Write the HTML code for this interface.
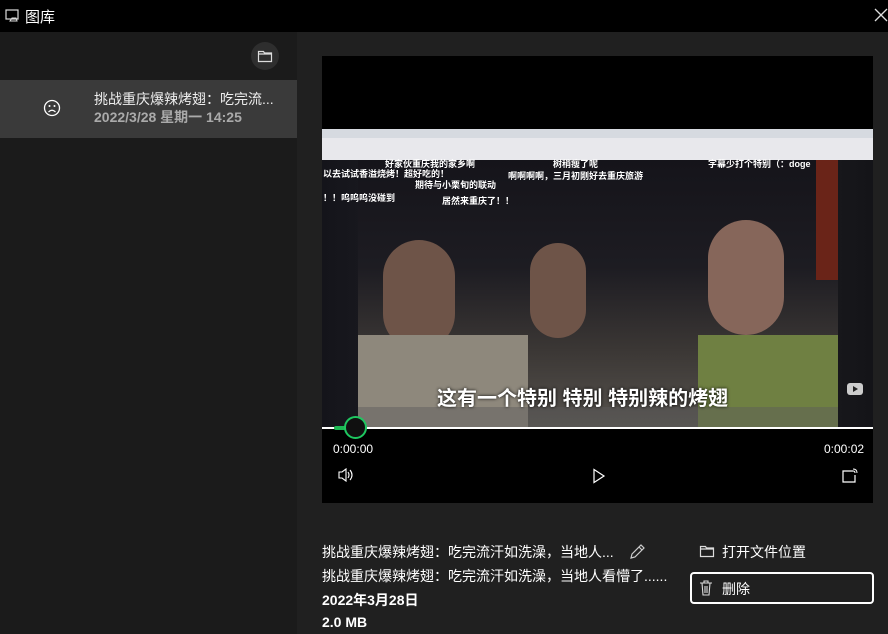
<!DOCTYPE html>
<html><head><meta charset="utf-8"><style>
*{margin:0;padding:0;box-sizing:border-box}
body{width:888px;height:634px;background:#202020;font-family:"Liberation Sans","Noto Sans CJK SC",sans-serif;color:#fff;position:relative;overflow:hidden}
.abs{position:absolute}
</style></head><body>
<div class="abs" style="left:0;top:0;width:888px;height:32px;background:#000"></div>
<svg class="abs" style="left:5px;top:9px" width="15" height="14" viewBox="0 0 15 14"><rect x="1" y="1" width="12" height="9" fill="none" stroke="#ddd" stroke-width="1.2"/><path d="M5 12 l2-3 h4 l1 3z" fill="none" stroke="#ddd"/></svg>
<div class="abs" style="left:25px;top:6px;font-size:15px;color:#fff">图库</div>
<svg class="abs" style="left:874px;top:8px" width="14" height="14"><path d="M1 1L13 13M13 1L1 13" stroke="#ddd" stroke-width="1.3"/></svg>
<div class="abs" style="left:0;top:32px;width:297px;height:602px;background:#1b1b1b"></div>
<div class="abs" style="left:251px;top:42px;width:28px;height:28px;border-radius:50%;background:#2e2e2e"></div>
<svg class="abs" style="left:257px;top:49px" width="16" height="14"><path d="M1.5 2.5h5l1 1.5h7v8.5h-13z M1.5 5h13" fill="none" stroke="#ddd" stroke-width="1.2"/></svg>
<div class="abs" style="left:0;top:80px;width:297px;height:58px;background:#3a3a3a"></div>
<svg class="abs" style="left:43px;top:99px" width="18" height="18"><circle cx="9" cy="9" r="7.5" fill="none" stroke="#fff" stroke-width="1.3"/><circle cx="6.5" cy="7" r="1" fill="#fff"/><circle cx="11.5" cy="7" r="1" fill="#fff"/><path d="M5.5 13q3.5-3.5 7 0" fill="none" stroke="#fff" stroke-width="1.2"/></svg>
<div class="abs" style="left:94px;top:89px;font-size:14px;color:#eee">挑战重庆爆辣烤翅：吃完流...</div>
<div class="abs" style="left:94px;top:107px;font-size:14px;color:#aaa;font-weight:bold">2022/3/28 星期一 14:25</div>

<div class="abs" style="left:322px;top:56px;width:551px;height:447px;background:#000"></div>
<div class="abs" style="left:322px;top:129px;width:551px;height:300px;background:linear-gradient(90deg,#14141a,#2a2a30 40%,#222226 70%,#141418)"></div>
<div class="abs" style="left:322px;top:129px;width:551px;height:31px;background:#e8e8ec"></div>
<div class="abs" style="left:322px;top:129px;width:551px;height:9px;background:#d6dae0"></div>
<div class="abs" style="left:358px;top:160px;width:480px;height:268px;background:linear-gradient(180deg,#15141a 0%,#1d1c22 40%,#3a3634 70%,#57534e 100%)"></div>
<div class="abs" style="left:383px;top:240px;width:72px;height:110px;border-radius:36px;background:#6e5448"></div>
<div class="abs" style="left:530px;top:243px;width:56px;height:95px;border-radius:28px;background:#6e5448"></div>
<div class="abs" style="left:708px;top:220px;width:76px;height:115px;border-radius:38px;background:#86665a"></div>
<div class="abs" style="left:698px;top:335px;width:140px;height:93px;background:#6f8042"></div>
<div class="abs" style="left:358px;top:335px;width:170px;height:93px;background:#8e887c"></div>
<div class="abs" style="left:816px;top:160px;width:22px;height:120px;background:#6a2418"></div>
<div class="abs" style="left:358px;top:407px;width:480px;height:20px;background:rgba(90,90,90,.45)"></div>
<div class="abs" style="left:323px;top:168px;font-size:9px;color:#fff;font-weight:bold;line-height:12px">以去试试香溢烧烤！超好吃的！<br><br>！！呜呜呜没碰到</div>
<div class="abs" style="left:385px;top:157px;font-size:9px;color:#fff;font-weight:bold">好家伙重庆我的家乡啊</div>
<div class="abs" style="left:415px;top:178px;font-size:9px;color:#fff;font-weight:bold">期待与小栗旬的联动</div>
<div class="abs" style="left:442px;top:194px;font-size:9px;color:#fff;font-weight:bold">居然来重庆了！！</div>
<div class="abs" style="left:508px;top:158px;font-size:9px;color:#fff;font-weight:bold;text-align:center;line-height:12px">树稍瘦了呢<br>啊啊啊啊，三月初刚好去重庆旅游</div>
<div class="abs" style="left:708px;top:157px;font-size:9px;color:#fff;font-weight:bold">字幕少打个特别（：doge</div>
<div class="abs" style="left:437px;top:382px;font-size:20px;color:#fff;font-weight:bold;text-shadow:0 0 3px #000">这有一个特别 特别 特别辣的烤翅</div>
<div class="abs" style="left:322px;top:427px;width:551px;height:2px;background:#fff"></div>
<div class="abs" style="left:334px;top:426px;width:12px;height:4px;background:#1db954;border-radius:2px"></div>
<div class="abs" style="left:344px;top:416px;width:23px;height:23px;border-radius:50%;background:#101010;border:2px solid #1ec760"></div>
<div class="abs" style="left:333px;top:442px;font-size:12px;color:#fff">0:00:00</div>
<div class="abs" style="left:824px;top:442px;font-size:12px;color:#fff">0:00:02</div>
<svg class="abs" style="left:337px;top:467px" width="18" height="16"><path d="M2 5h3l4-3v12l-4-3H2z M11 5q2 3 0 6 M13 3q4 5 0 10" fill="none" stroke="#fff" stroke-width="1.1"/></svg>
<svg class="abs" style="left:592px;top:468px" width="14" height="16"><path d="M2 1.5L12 8L2 14.5z" fill="none" stroke="#fff" stroke-width="1.2"/></svg>
<svg class="abs" style="left:841px;top:467px" width="18" height="16"><path d="M12 4H2v11h12V8" fill="none" stroke="#fff" stroke-width="1.2"/><path d="M12 2q4 0 4 4M12 4q2 0 2 2" fill="none" stroke="#fff"/></svg>
<svg class="abs" style="left:846px;top:381px" width="18" height="16"><rect x="1" y="2" width="16" height="12" rx="3" fill="#ccc"/><path d="M7 5l5 3-5 3z" fill="#222"/></svg>

<div class="abs" style="left:322px;top:542px;font-size:14px;color:#fff">挑战重庆爆辣烤翅：吃完流汗如洗澡，当地人...</div>
<svg class="abs" style="left:628px;top:543px" width="18" height="18"><path d="M3 15l1-4 9-9 3 3-9 9z M11 4l3 3" fill="none" stroke="#ccc" stroke-width="1.2"/></svg>
<div class="abs" style="left:322px;top:566px;font-size:14px;color:#fff">挑战重庆爆辣烤翅：吃完流汗如洗澡，当地人看懵了......</div>
<div class="abs" style="left:322px;top:590px;font-size:14px;color:#fff;font-weight:bold">2022年3月28日</div>
<div class="abs" style="left:322px;top:614px;font-size:14px;color:#fff;font-weight:bold">2.0 MB</div>
<svg class="abs" style="left:699px;top:544px" width="16" height="14"><path d="M1.5 2.5h5l1 1.5h7v8.5h-13z M1.5 5h13" fill="none" stroke="#ddd" stroke-width="1.2"/></svg>
<div class="abs" style="left:722px;top:542px;font-size:14px;color:#fff">打开文件位置</div>
<div class="abs" style="left:690px;top:572px;width:184px;height:32px;border:2px solid #fff;border-radius:4px"></div>
<svg class="abs" style="left:699px;top:580px" width="14" height="16"><path d="M1 3h12M5 3V1h4v2M3 3l1 12h6l1-12M6 6v7M8 6v7" fill="none" stroke="#ddd" stroke-width="1.1"/></svg>
<div class="abs" style="left:722px;top:579px;font-size:14px;color:#fff">删除</div>
</body></html>
